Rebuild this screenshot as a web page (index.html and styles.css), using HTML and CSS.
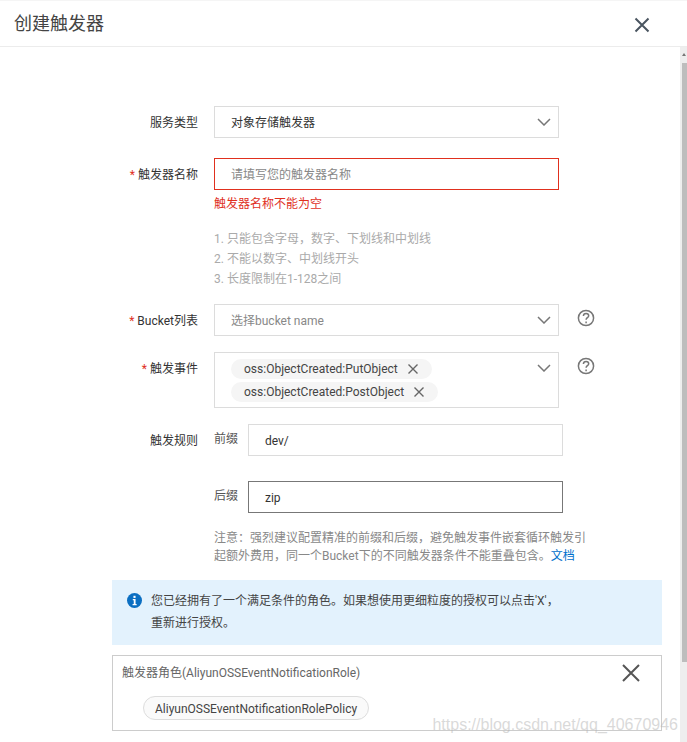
FILE: index.html
```html
<!DOCTYPE html>
<html lang="zh-CN">
<head>
  <meta charset="UTF-8" />
  <title>创建触发器</title>
  <link rel="stylesheet" href="styles.css">
</head>
<body>
  <div class="dialog">
    <div class="dialog-head">
      <h2>创建触发器</h2>
      <svg class="close-big" width="18" height="18" viewBox="0 0 18 18"><path d="M2.5 2.5l13 13M15.5 2.5l-13 13"/></svg>
    </div>

    <div class="dialog-body">
      <div class="form-area">
        <div class="row row-service">
          <label class="label">服务类型</label>
          <div class="field select-box">对象存储触发器
            <svg class="chevron" width="14" height="8" viewBox="0 0 14 8"><path d="M1 1l6 6 6-6"/></svg>
          </div>
        </div>

        <div class="row row-name">
          <label class="label"><span class="star">*</span> 触发器名称</label>
          <div class="field input-error placeholder">请填写您的触发器名称</div>
        </div>
        <div class="error-msg">触发器名称不能为空</div>
        <ul class="hints">
          <li>1. 只能包含字母，数字、下划线和中划线</li>
          <li>2. 不能以数字、中划线开头</li>
          <li>3. 长度限制在1-128之间</li>
        </ul>

        <div class="row row-bucket">
          <label class="label"><span class="star">*</span> Bucket列表</label>
          <div class="field select-box placeholder">选择bucket name
            <svg class="chevron" width="14" height="8" viewBox="0 0 14 8"><path d="M1 1l6 6 6-6"/></svg>
          </div>
          <svg class="help" width="18" height="18" viewBox="0 0 18 18"><circle cx="9" cy="9" r="7.6"/><path d="M6.4 7c0-1.6 1.2-2.6 2.7-2.6s2.6 1 2.6 2.3c0 1.9-2.6 2-2.6 4"/><path class="dot" d="M9.1 12.6v1.6"/></svg>
        </div>

        <div class="row row-event">
          <label class="label"><span class="star">*</span> 触发事件</label>
          <div class="field multi-box">
            <span class="tag">oss:ObjectCreated:PutObject<svg width="12" height="12" viewBox="0 0 12 12"><path d="M1.5 1.5l9 9M10.5 1.5l-9 9"/></svg></span>
            <span class="tag">oss:ObjectCreated:PostObject<svg width="12" height="12" viewBox="0 0 12 12"><path d="M1.5 1.5l9 9M10.5 1.5l-9 9"/></svg></span>
            <svg class="chevron" width="14" height="8" viewBox="0 0 14 8"><path d="M1 1l6 6 6-6"/></svg>
          </div>
          <svg class="help" width="18" height="18" viewBox="0 0 18 18"><circle cx="9" cy="9" r="7.6"/><path d="M6.4 7c0-1.6 1.2-2.6 2.7-2.6s2.6 1 2.6 2.3c0 1.9-2.6 2-2.6 4"/><path class="dot" d="M9.1 12.6v1.6"/></svg>
        </div>

        <div class="row row-rule">
          <label class="label">触发规则</label>
          <div class="rule-fields">
            <div class="rule-line">
              <span class="rule-name">前缀</span>
              <div class="field rule-input">dev/</div>
            </div>
            <div class="rule-line rule-suffix">
              <span class="rule-name">后缀</span>
              <div class="field rule-input rule-active">zip</div>
            </div>
          </div>
        </div>

        <p class="note">注意：强烈建议配置精准的前缀和后缀，避免触发事件嵌套循环触发引起额外费用，同一个Bucket下的不同触发器条件不能重叠包含。<a href="#">文档</a></p>
      </div>

      <div class="notice">
        <svg class="info" width="15" height="15" viewBox="0 0 14 14"><circle cx="7" cy="7" r="7"/><rect x="6" y="2.6" width="2" height="2"/><path d="M5.4 5.7H8v4.6h1v1.1H5.2v-1.1h1.1V6.8h-.9z"/></svg>
        <p>您已经拥有了一个满足条件的角色。如果想使用更细粒度的授权可以点击'X'，<br>重新进行授权。</p>
      </div>

      <div class="role-box">
        <div class="role-head">
          <span>触发器角色(AliyunOSSEventNotificationRole)</span>
          <svg class="close-role" width="20" height="20" viewBox="0 0 20 20"><path d="M2 2l16 16M18 2L2 18"/></svg>
        </div>
        <span class="policy">AliyunOSSEventNotificationRolePolicy</span>
      </div>
    </div>

    <div class="scrollbar"><div class="scroll-thumb"></div></div>
  </div>
  <div class="watermark">https://blog.csdn.net/qq_40670946</div>
</body>
</html>
```

FILE: styles.css
```css
* {
  box-sizing: border-box;
}

html, body {
  height: 100%;
}

body {
  margin: 0;
  overflow: hidden;
  background: #fff;
  color: #333;
  font-family: Roboto, "Noto Sans CJK SC", sans-serif;
  font-size: 12px;
}

.dialog {
  position: relative;
  height: 742px;
  overflow: hidden;
}

.dialog-head {
  display: flex;
  justify-content: space-between;
  align-items: center;
  height: 47px;
  padding: 3px 36px 0 14px;
  border-top: 1px solid #f5f5f5;
  border-bottom: 1px solid #ececec;
}

h2 {
  margin: 0 0 6px;
  font-size: 18px;
  font-weight: 400;
  color: #444;
}

.close-big {
  fill: none;
  stroke: #4a5560;
  stroke-width: 2;
}

.dialog-body {
  padding: 59px 25px 0 112px;
}

.form-area {
  width: 490px;
}

.row {
  display: flex;
  align-items: flex-start;
}

.label {
  flex: none;
  width: 86px;
  height: 32px;
  margin-right: 16px;
  line-height: 34px;
  text-align: right;
  color: #333;
}

.star {
  color: #e0301e;
}

.field {
  position: relative;
  width: 345px;
  height: 32px;
  padding-left: 16px;
  border: 1px solid #dcdcdc;
  line-height: 31px;
  padding-top: 1px;
  color: #333;
}

.placeholder {
  color: #888;
}

.chevron {
  position: absolute;
  top: 11px;
  right: 7px;
  fill: none;
  stroke: #777;
  stroke-width: 1.5;
}

.row-name {
  margin-top: 20px;
}

.input-error {
  border-color: #e0301e;
}

.error-msg {
  margin: 5px 0 0 102px;
  line-height: 18px;
  color: #e0301e;
}

.hints {
  margin: 16px 0 0 102px;
  padding: 0;
  list-style: none;
  line-height: 20px;
  color: #aaa;
}

.row-bucket {
  margin-top: 15px;
}

.help {
  flex: none;
  margin: 5px 0 0 18px;
  fill: none;
  stroke: #777;
  stroke-width: 1.5;
}

.row-event {
  margin-top: 16px;
}

.multi-box {
  display: flex;
  flex-direction: column;
  align-items: flex-start;
  gap: 3px;
  height: 56px;
  padding-top: 6px;
}

.tag {
  display: flex;
  align-items: center;
  height: 20px;
  padding: 0 13px;
  border-radius: 10px;
  background: #f5f5f5;
  color: #444;
  line-height: 22px;
}

.tag svg {
  margin-left: 9px;
  fill: none;
  stroke: #666;
  stroke-width: 1.4;
}

.row-rule {
  margin-top: 16px;
}

.rule-name {
  flex: none;
  width: 34px;
  color: #555;
  line-height: 30px;
}

.rule-line {
  display: flex;
}

.rule-suffix {
  margin-top: 25px;
}

.rule-input {
  width: 315px;
  padding-left: 16px;
}

.rule-active {
  border-color: #777;
}

.note {
  width: 380px;
  margin: 16px 0 0 102px;
  line-height: 18px;
  color: #888;
}

.note a {
  color: #0070cc;
  text-decoration: none;
}

.notice {
  display: flex;
  width: 550px;
  height: 65px;
  margin-top: 15px;
  padding: 10px 15px;
  background: #e3f2fd;
}

.info {
  flex: none;
  margin: 3px 9px 0 0;
  fill: #0b6fc2;
}

.info rect,
.info path {
  fill: #fff;
}

.notice p {
  margin: 0;
  line-height: 22px;
  color: #444;
}

.role-box {
  width: 550px;
  height: 76px;
  margin-top: 10px;
  padding: 0 9px;
  border: 1px solid #ccc;
}

.role-head {
  display: flex;
  justify-content: space-between;
  padding: 7px 11px 0 0;
  color: #666;
  line-height: 18px;
}

.role-head span {
  padding-top: 1px;
}

.close-role {
  fill: none;
  stroke: #555;
  stroke-width: 2;
}

.policy {
  display: block;
  width: fit-content;
  height: 24px;
  margin: 13px 0 0 21px;
  padding: 0 11px;
  border: 1px solid #ddd;
  border-radius: 12px;
  background: #fafafa;
  color: #444;
  line-height: 24px;
}

.scrollbar {
  position: absolute;
  top: 47px;
  right: 0;
  bottom: 0;
  width: 7px;
  padding-left: 2px;
  background: #eee;
}

/* up arrow of the scrollbar */
.scrollbar::before {
  content: "";
  display: block;
  width: 0;
  margin: 6px 0 0;
  border: 2px solid transparent;
  border-top: 0;
  border-bottom: 3px solid #777;
}

.scroll-thumb {
  height: 599px;
  margin-top: 7px;
  background: #bdbdbd;
}

/* csdn image stamp */
.watermark {
  position: absolute;
  right: 9px;
  bottom: 8px;
  font-family: "Liberation Sans", sans-serif;
  font-size: 16px;
  color: rgba(180, 180, 180, 0.5);
}
```
